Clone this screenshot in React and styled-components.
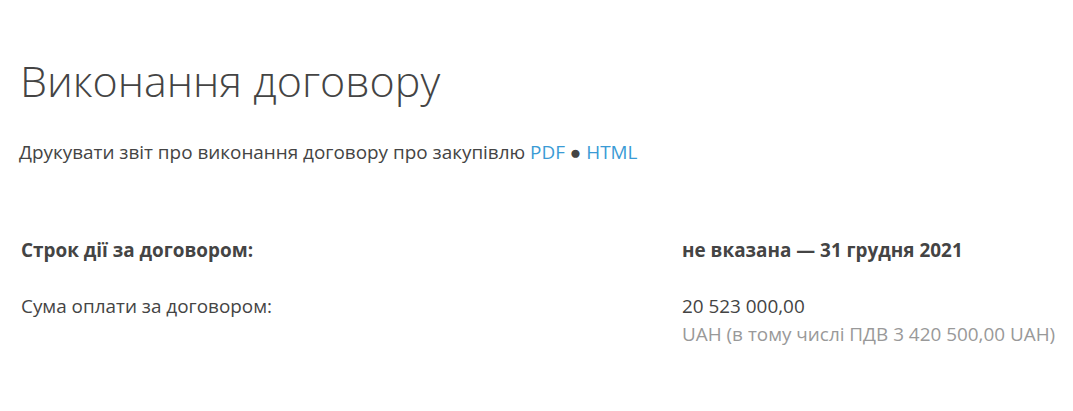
import React from "react";
import styled, { createGlobalStyle } from "styled-components";

const Global = createGlobalStyle`
  html, body { margin: 0; padding: 0; background: #fff; }
  body { font-family: "Open Sans", "Noto Sans", sans-serif; color: #444; }
`;

const Page = styled.div`
  padding: 57px 10px 40px 20px;
`;

const Title = styled.h1`
  margin: 0;
  font-size: 43px;
  line-height: 48px;
  font-weight: 300;
  color: #444;
`;

const PrintLine = styled.p`
  margin: 33px 0 0 -1px;
  font-size: 18.9px;
  line-height: 28px;
  color: #444;
`;

const Link = styled.a`
  color: #3a9bd5;
  text-decoration: none;
`;

const Dot = styled.span`
  color: #444;
`;

const Details = styled.div`
  margin-top: 70px;
  display: grid;
  grid-template-columns: 661px 1fr;
  row-gap: 28px;
  padding-left: 1px;
`;

const Label = styled.div`
  font-size: 18.9px;
  line-height: 28px;
  font-weight: ${(p) => (p.$bold ? 700 : 400)};
  color: #444;
`;

const Value = styled.div`
  font-size: 18.9px;
  line-height: 28px;
  font-weight: ${(p) => (p.$bold ? 700 : 400)};
  color: #444;
`;

const Muted = styled.div`
  color: #999;
  white-space: nowrap;
`;

export default function App() {
  return (
    <>
      <Global />
      <Page>
        <Title>Виконання договору</Title>
        <PrintLine>
          Друкувати звіт про виконання договору про закупівлю{" "}
          <Link href="#">PDF</Link> <Dot>●</Dot> <Link href="#">HTML</Link>
        </PrintLine>
        <Details>
          <Label $bold>Строк дії за договором:</Label>
          <Value $bold>не вказана — 31 грудня 2021</Value>
          <Label>Сума оплати за договором:</Label>
          <Value>
            20 523 000,00
            <Muted>UAH (в тому числі ПДВ 3 420 500,00 UAH)</Muted>
          </Value>
        </Details>
      </Page>
    </>
  );
}
